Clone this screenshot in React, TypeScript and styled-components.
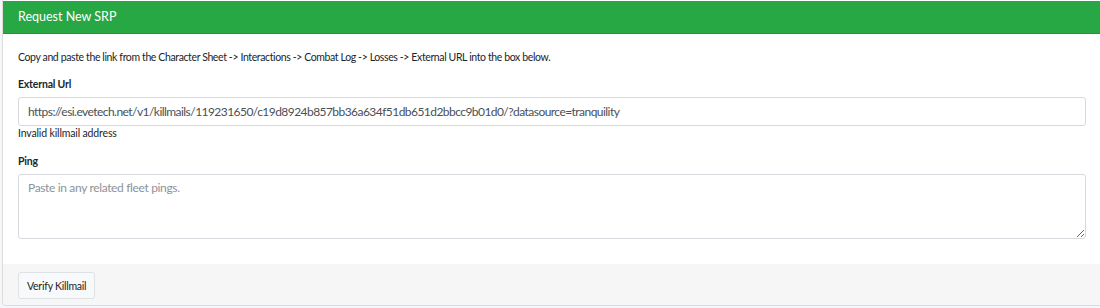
import React from "react";
import styled, { createGlobalStyle } from "styled-components";

const Global = createGlobalStyle`
  html, body { margin: 0; padding: 0; background: #f4f6f9; }
  body { font-family: "Lato", "Noto Sans", sans-serif; color: #212529; }
  * { box-sizing: border-box; }
`;

const Card = styled.div`
  margin-left: 2px;
  width: 1100px;
  background: #fff;
  border: 1px solid #dcdcdc;
  border-top: none;
  border-radius: 0 0 4px 4px;
  display: flex;
  flex-direction: column;
  overflow: hidden;
`;

const Header = styled.div`
  flex-shrink: 0;
  height: 33px;
  margin-top: 1px;
  background: #28a745;
  color: #fff;
  font-size: 12.5px;
  padding: 0 15px 1px;
  display: flex;
  align-items: center;
  border-bottom: 1px solid #23963d;
`;

const Body = styled.div`
  flex-shrink: 0;
  padding: 16px 15px 0 15px;
  display: flex;
  flex-direction: column;
`;

const Intro = styled.p`
  margin: 0 0 12px;
  font-size: 10.5px;
  line-height: 15px;
  letter-spacing: -0.38px;
`;

const Label = styled.label`
  display: block;
  font-weight: 700;
  font-size: 10.5px;
  line-height: 15px;
  margin-bottom: 5px;
  letter-spacing: -0.2px;
`;

const Input = styled.input`
  display: block;
  width: 100%;
  height: 29px;
  padding: 0 9px;
  border: 1px solid #d6dadf;
  border-radius: 3px;
  font-family: inherit;
  font-size: 12px;
  letter-spacing: -0.55px;
  color: #495057;
  background: #fff;
  outline: none;
`;

const Help = styled.div`
  font-size: 10.5px;
  line-height: 13px;
  margin: 1px 0 14px;
  color: #212529;
  letter-spacing: -0.15px;
`;

const TextArea = styled.textarea`
  display: block;
  width: 100%;
  height: 65px;
  padding: 5px 9px;
  border: 1px solid #d6dadf;
  border-radius: 3px;
  font-family: inherit;
  font-size: 12px;
  letter-spacing: -0.35px;
  color: #495057;
  resize: vertical;
  outline: none;
  &::placeholder { color: #8c9399; }
`;

const Footer = styled.div`
  flex-shrink: 0;
  margin-top: 25px;
  height: 41px;
  background: #f6f6f6;
  padding: 8px 15px;
  display: flex;
  align-items: flex-start;
`;

const Button = styled.button`
  height: 27px;
  padding: 0 8px;
  border: 1px solid #dfe2e5;
  border-radius: 3px;
  background: #f8f9fa;
  font-family: inherit;
  font-size: 10.5px;
  letter-spacing: -0.25px;
  color: #212529;
`;

export default function App() {
  return (
    <>
      <Global />
      <Card>
        <Header>Request New SRP</Header>
        <Body>
          <Intro>
            Copy and paste the link from the Character Sheet -&gt; Interactions -&gt; Combat Log -&gt; Losses -&gt; External URL into the box below.
          </Intro>
          <Label>External Url</Label>
          <Input
            readOnly
            value="https://esi.evetech.net/v1/killmails/119231650/c19d8924b857bb36a634f51db651d2bbcc9b01d0/?datasource=tranquility"
          />
          <Help>Invalid killmail address</Help>
          <Label>Ping</Label>
          <TextArea placeholder="Paste in any related fleet pings." />
        </Body>
        <Footer>
          <Button>Verify Killmail</Button>
        </Footer>
      </Card>
    </>
  );
}
